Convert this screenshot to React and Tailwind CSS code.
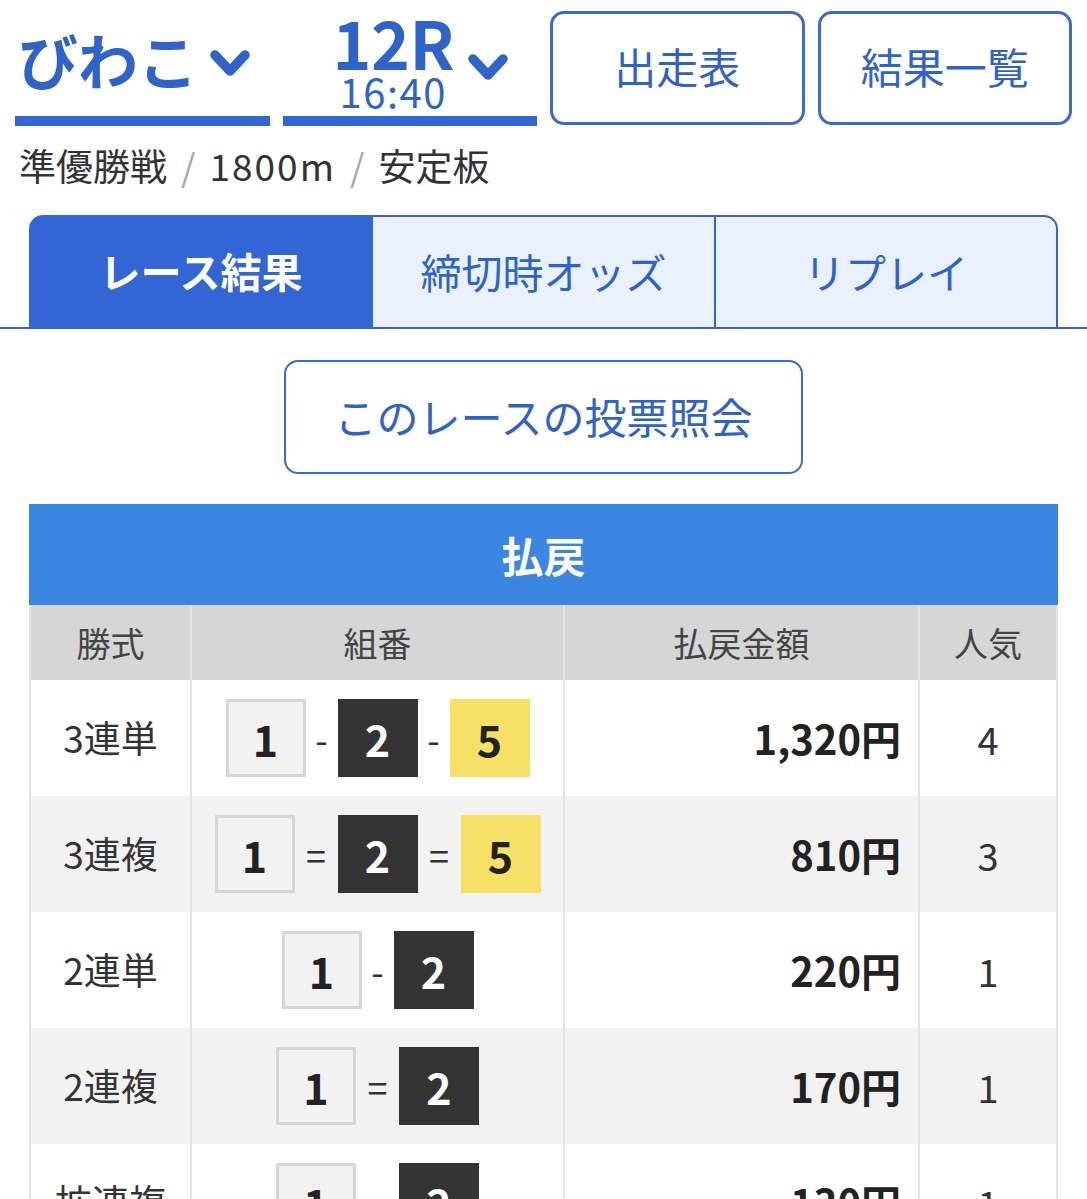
import React from "react";

const BLUE = "text-[#2f63cc]";

function Chevron({ className }) {
  return (
    <svg viewBox="0 0 40 30" className={className} fill="none">
      <polyline points="5,6 20,22 35,6" stroke="#2f63cc" strokeWidth="9.5" strokeLinecap="round" strokeLinejoin="round" />
    </svg>
  );
}

function Box({ n }) {
  const cls =
    n === 1
      ? "bg-[#f2f2f2] border-[3px] border-[#d6d6d6] text-[#222]"
      : n === 2
      ? "bg-[#333333] text-white"
      : "bg-[#f6e166] text-[#222]";
  return (
    <div className={`w-[80px] h-[78px] flex items-center justify-center text-[43px] font-bold leading-none ${cls}`}>
      {n}
    </div>
  );
}

function Sep({ s }) {
  return (
    <div className={`${s === "=" ? "w-[43px]" : "w-[32px]"} text-center text-[36px] text-[#333] leading-none`}>{s}</div>
  );
}

const rows = [
  { type: "3連単", nums: [1, 2, 5], sep: "-", amt: "1,320円", pop: "4" },
  { type: "3連複", nums: [1, 2, 5], sep: "=", amt: "810円", pop: "3" },
  { type: "2連単", nums: [1, 2], sep: "-", amt: "220円", pop: "1" },
  { type: "2連複", nums: [1, 2], sep: "=", amt: "170円", pop: "1" },
  { type: "拡連複", nums: [1, 2], sep: "=", amt: "130円", pop: "1" },
];

export default function App() {
  return (
    <div className="w-[1087px] h-[1199px] overflow-hidden bg-white font-['Noto_Sans_CJK_JP',sans-serif]">
      {/* top */}
      <div className="grid grid-cols-4 gap-[13px] px-[15px] pt-[11px]">
        <div className="flex flex-col h-[115px]">
          <div className="flex-1 flex items-center pl-[3px] pb-[10px]">
            <span className={`text-[60px] font-bold leading-none ${BLUE}`}>びわこ</span>
            <Chevron className="w-[40px] h-[30px] ml-[12px] mt-[10px]" />
          </div>
          <div className="h-[10px] bg-[#3166d4]" />
        </div>
        <div className="flex flex-col h-[115px]">
          <div className="flex-1 flex items-start pl-[50px]">
            <div className="flex flex-col items-center">
              <span className={`text-[66px] font-bold leading-[54px] tracking-[-0.5px] mt-[3px] ${BLUE}`}>12R</span>
              <span className={`text-[40px] leading-[32px] tracking-[1.5px] mt-[7px] ${BLUE}`}>16:40</span>
            </div>
            <Chevron className="w-[40px] h-[30px] ml-[14px] mt-[42px]" />
          </div>
          <div className="h-[10px] bg-[#3166d4]" />
        </div>
        <div className={`h-[114px] border-[3px] border-[#3a6bd0] rounded-[14px] flex items-center justify-center pb-[6px] text-[42px] ${BLUE}`}>
          出走表
        </div>
        <div className={`h-[114px] border-[3px] border-[#3a6bd0] rounded-[14px] flex items-center justify-center pb-[6px] text-[42px] ${BLUE}`}>
          結果一覧
        </div>
      </div>

      {/* subtitle */}
      <div className="mt-[12px] pl-[19px] text-[37px] leading-[54px] text-[#333] flex items-center">
        <span>準優勝戦</span>
        <span className="text-[#aaa] mx-[14px]">/</span>
        <span className="tracking-[2px]">1800m</span>
        <span className="text-[#aaa] mx-[14px]">/</span>
        <span>安定板</span>
      </div>

      {/* tabs */}
      <div className="mt-[23px] flex px-[29px] h-[112px]">
        <div className="w-[344px] bg-[#3166d4] rounded-tl-[14px] flex items-center justify-center text-[41px] font-bold text-white">
          レース結果
        </div>
        <div className={`w-[343px] bg-[#e9f1fd] border-t-2 border-r-2 border-[#3366cc] flex items-center justify-center text-[41px] ${BLUE}`}>
          締切時オッズ
        </div>
        <div className={`flex-1 bg-[#e9f1fd] border-t-2 border-r-2 border-[#3366cc] rounded-tr-[14px] flex items-center justify-center text-[41px] ${BLUE}`}>
          リプレイ
        </div>
      </div>
      <div className="h-[2px] bg-[#3366cc] shadow-[0_4px_4px_-1px_rgba(0,0,0,0.2)]" />

      {/* button */}
      <div className={`mt-[31px] mx-auto w-[519px] h-[114px] border-2 border-[#3a6bd0] rounded-[14px] flex items-center justify-center pb-[4px] text-[42px] ${BLUE}`}>
        このレースの投票照会
      </div>

      {/* table */}
      <div className="mt-[30px] mx-[29px]">
        <div className="h-[101px] bg-[#3b86e1] flex items-center justify-center text-[42px] font-bold text-white">
          払戻
        </div>
        <div className="grid grid-cols-[161px_373px_355px_140px] h-[75px] bg-[#d6d6d6] text-[34px] text-[#444]">
          <div className="border-l-2 border-[#e4e4e4] flex items-center justify-center">勝式</div>
          <div className="border-l-2 border-[#e4e4e4] flex items-center justify-center">組番</div>
          <div className="border-l-2 border-[#e4e4e4] flex items-center justify-center">払戻金額</div>
          <div className="border-l-2 border-r-2 border-[#e4e4e4] flex items-center justify-center">人気</div>
        </div>
        {rows.map((r, i) => (
          <div
            key={i}
            className={`grid grid-cols-[161px_373px_355px_140px] h-[116px] ${i % 2 === 1 ? "bg-[#f2f2f2]" : "bg-white"}`}
          >
            <div className="border-l-2 border-[#e4e4e4] flex items-center justify-center text-[37px] text-[#333]">
              {r.type}
            </div>
            <div className="border-l-2 border-[#e4e4e4] flex items-center justify-center">
              {r.nums.map((n, j) => (
                <React.Fragment key={j}>
                  {j > 0 && <Sep s={r.sep} />}
                  <Box n={n} />
                </React.Fragment>
              ))}
            </div>
            <div className="border-l-2 border-[#e4e4e4] flex items-center justify-end pr-[17px] text-[40px] font-bold text-[#222]">
              {r.amt}
            </div>
            <div className="border-l-2 border-r-2 border-[#e4e4e4] flex items-center justify-center text-[38px] text-[#333]">
              {r.pop}
            </div>
          </div>
        ))}
      </div>
    </div>
  );
}
